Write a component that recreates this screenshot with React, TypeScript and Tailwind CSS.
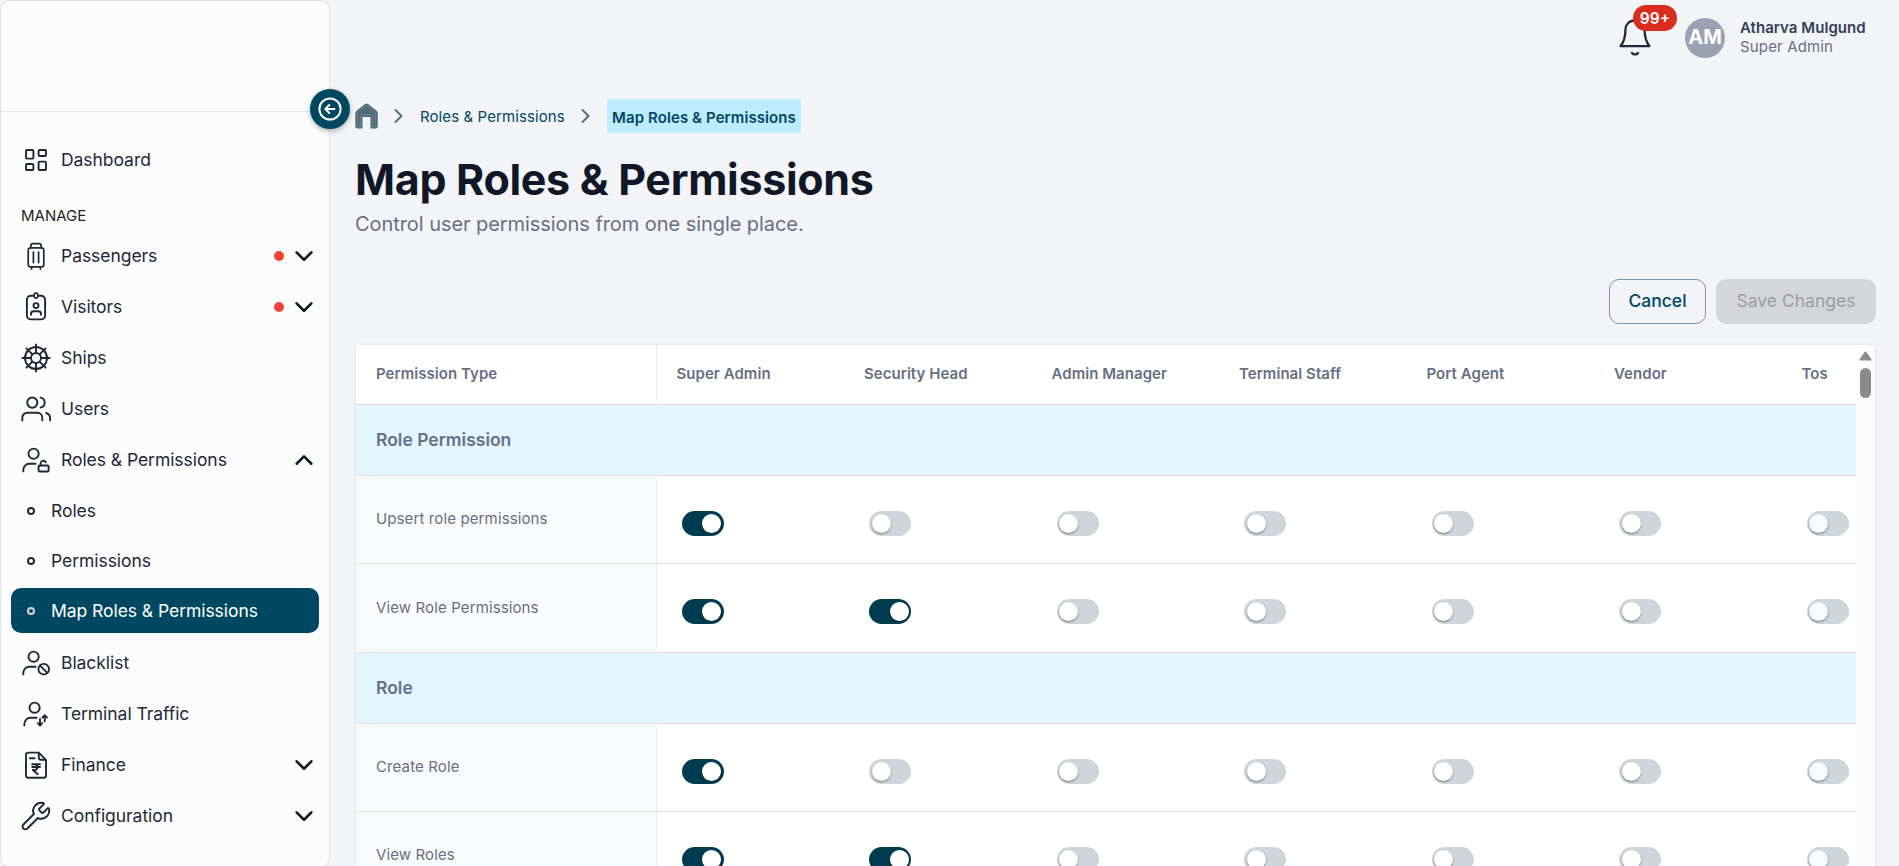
import type { ReactNode } from "react";

const heads = ["Super Admin", "Security Head", "Admin Manager", "Terminal Staff", "Port Agent", "Vendor", "Tos"];

type Row = { label: string; on: number; height: string; section?: boolean };

const rows: Row[] = [
  { label: "Role Permission", on: 0, height: "h-[71px]", section: true },
  { label: "Upsert role permissions", on: 1, height: "h-[88px]" },
  { label: "View Role Permissions", on: 2, height: "h-[89px]" },
  { label: "Role", on: 0, height: "h-[71px]", section: true },
  { label: "Create Role", on: 1, height: "h-[88px]" },
  { label: "View Roles", on: 2, height: "h-[88px]" },
];

function Icon({ children }: { children: ReactNode }) {
  return (
    <svg
      width="30"
      height="30"
      viewBox="0 0 30 30"
      fill="none"
      stroke="#1d2939"
      strokeWidth="1.9"
      strokeLinecap="round"
      strokeLinejoin="round"
      className="shrink-0 overflow-visible"
    >
      {children}
    </svg>
  );
}

const dashboardIcon = (
  <Icon>
    <rect x="5" y="5" width="7.4" height="8.6" rx="1" />
    <rect x="17.6" y="5" width="7.4" height="6" rx="1" />
    <rect x="5" y="19" width="7.4" height="6" rx="1" />
    <rect x="17.6" y="16.6" width="7.4" height="8.4" rx="1" />
  </Icon>
);

const passengersIcon = (
  <Icon>
    <rect x="7.2" y="6.8" width="15.6" height="19" rx="2.4" strokeWidth="1.7" />
    <path d="M9.9 6.6V4.6a2 2 0 0 1 2-2h6.2a2 2 0 0 1 2 2v2M12.4 11v10.6M17.6 11v10.6M10.6 26v2M19.4 26v2" strokeWidth="1.7" />
  </Icon>
);

const visitorsIcon = (
  <Icon>
    <path d="M12.8 3.8h-2.9a4 4 0 0 0-4 4v15.6a4 4 0 0 0 4 4h10.2a4 4 0 0 0 4-4V7.8a4 4 0 0 0-4-4h-2.9" />
    <rect x="13.2" y="1.2" width="3.6" height="5" rx="1.6" strokeWidth="1.7" />
    <circle cx="15" cy="13.6" r="2.5" />
    <path d="M10 22.8v-1a2.6 2.6 0 0 1 2.6-2.6h4.8a2.6 2.6 0 0 1 2.6 2.6v1" />
  </Icon>
);

const shipsIcon = (
  <Icon>
    <circle cx="15" cy="15" r="11" />
    <circle cx="15" cy="15" r="5" />
    <path d="M15 1.4V10M15 20v8.6M1.4 15H10M20 15h8.6M5.4 5.4l6 6M18.6 18.6l6 6M24.6 5.4l-6 6M11.4 18.6l-6 6" />
  </Icon>
);

const usersIcon = (
  <Icon>
    <circle cx="11.3" cy="8.6" r="5.1" />
    <path d="M1.3 26.4v-2.6a5 5 0 0 1 5-5h10a5 5 0 0 1 5 5v2.6M19.6 3.6a5.1 5.1 0 0 1 0 10M25.2 19c2.4.8 3.9 2.6 3.9 5.2v2.2" />
  </Icon>
);

const rolesIcon = (
  <Icon>
    <circle cx="12.6" cy="8.7" r="5.1" />
    <path d="M2.3 26.4v-1.6a6 6 0 0 1 6-6h6.2" />
    <rect x="17.6" y="20.5" width="10" height="6" rx="1" />
    <path d="M19.6 20.3v-1.7a2.8 2.8 0 0 1 5.2-1.4" />
  </Icon>
);

const blacklistIcon = (
  <Icon>
    <circle cx="12.6" cy="8.7" r="5.1" />
    <path d="M2.3 26.4v-1.6a6 6 0 0 1 6-6h6.2" />
    <circle cx="22.7" cy="21.2" r="5.3" />
    <path d="M19 17.6l7.3 7.3" />
  </Icon>
);

const trafficIcon = (
  <Icon>
    <circle cx="13.6" cy="8.7" r="5.1" />
    <path d="M3.4 26.4v-1.6a6 6 0 0 1 6-6h6.2" />
    <path d="M19 20v6.2M16.8 24.2l2.2 2.3 2.2-2.3M23.7 22.6v-6.2M21.4 18.6l2.3-2.4 2.3 2.4" />
  </Icon>
);

const financeIcon = (
  <Icon>
    <path d="M17.8 2.6H7.2a2.2 2.2 0 0 0-2.2 2.2v20.8a2.2 2.2 0 0 0 2.2 2.2h15.6a2.2 2.2 0 0 0 2.2-2.2V9.8zM17.8 2.6v5.2a2 2 0 0 0 2 2H25M8.8 8.3h4.8" />
    <path d="M11.2 14.2h7.8M11.2 17h7.8M12.2 14.2h1.4c3.8 0 3.8 5.8 0 5.8h-1.8l5 4.2" />
  </Icon>
);

const wrenchIcon = (
  <Icon>
    <path
      transform="translate(-1.1 -.9) scale(1.33)"
      strokeWidth="1.45"
      d="M14.7 6.3a1 1 0 0 0 0 1.4l1.6 1.6a1 1 0 0 0 1.4 0l3.106-3.105c.32-.322.863-.22.983.218a6 6 0 0 1-8.259 7.057l-7.91 7.91a1 1 0 0 1-2.999-3l7.91-7.91a6 6 0 0 1 7.057-8.259c.438.12.54.662.219.984z"
    />
  </Icon>
);

function Chevron({ up }: { up?: boolean }) {
  return (
    <svg width="20" height="12" viewBox="0 0 20 12" fill="none" stroke="#101828" strokeWidth="2.6" strokeLinecap="round" strokeLinejoin="round">
      <path d={up ? "M2.6 9.7L10 2.4l7.4 7.3" : "M2.6 2.4L10 9.7l7.4-7.3"} />
    </svg>
  );
}

function NavItem({ icon, label, dot, arrow }: { icon: ReactNode; label: string; dot?: boolean; arrow?: "up" | "down" }) {
  return (
    <a className="flex h-[51px] items-center pl-5 pr-[15px] text-[17.5px] tracking-[-0.05px] text-[#1d2939]">
      {icon}
      <span className="ml-[10px] grow whitespace-nowrap pt-px">{label}</span>
      {dot && <span className="mr-[10px] size-[10px] rounded-full bg-[#f44336]" />}
      {arrow && <Chevron up={arrow === "up"} />}
    </a>
  );
}

function SubItem({ label, active }: { label: string; active?: boolean }) {
  return (
    <a
      className={
        "mx-[10px] flex h-[45px] items-center rounded-[10px] pl-4 text-[17.5px] tracking-[-0.05px] " +
        (active ? "bg-[#004861] text-white" : "text-[#1d2939]")
      }
    >
      <span className={"size-2 rounded-full border-2 " + (active ? "border-[#d5d5cf]" : "border-[#1d2939]")} />
      <span className="ml-4 whitespace-nowrap pt-[2px]">{label}</span>
    </a>
  );
}

function Toggle({ on, last }: { on: boolean; last: boolean }) {
  return (
    <span className={"flex h-[25px] w-[42px] rounded-full px-[2.5px] pt-[2.5px] " + (on ? "justify-end bg-[#003c50]" : "bg-[#d0d5dd]")}>
      <span className={"size-[19px] rounded-full shadow-[0_1px_2px_rgba(16,24,40,0.5)] " + (last ? "bg-[#f9fafb]" : "bg-white")} />
    </span>
  );
}

function Crumb() {
  return (
    <svg width="10" height="16" viewBox="0 0 10 16" fill="none" stroke="#53707c" strokeWidth="2" strokeLinecap="round" strokeLinejoin="round">
      <path d="M1.5 2l6 6-6 6" />
    </svg>
  );
}

export default function App() {
  return (
    <div className="flex h-[866px] w-[1899px] overflow-hidden bg-[#f2f4f8] font-['Inter',sans-serif]">
      <aside className="relative flex h-[868px] w-[330px] shrink-0 flex-col rounded-[10px] border border-[#dfe1e6] bg-[#fcfcfd]">
        <div className="h-[111px] shrink-0 border-b border-[#e4e6ea]" />
        <button className="absolute left-[309px] top-[88px] flex size-10 items-center justify-center rounded-full bg-[#004861] shadow-[0_2px_5px_rgba(0,0,0,0.3)]">
          <svg width="24" height="24" viewBox="0 0 24 24" fill="none" stroke="white" strokeWidth="2" strokeLinecap="round" strokeLinejoin="round">
            <circle cx="12" cy="12" r="10.6" />
            <path d="M16.5 12h-9M11.3 8l-4 4 4 4" />
          </svg>
        </button>
        <nav className="pt-[22px]">
          <NavItem icon={dashboardIcon} label="Dashboard" />
          <h2 className="mt-[20px] h-[25.5px] pl-5 text-[15px] leading-[22px] text-[#1f1f1f]">MANAGE</h2>
          <NavItem icon={passengersIcon} label="Passengers" dot arrow="down" />
          <NavItem icon={visitorsIcon} label="Visitors" dot arrow="down" />
          <NavItem icon={shipsIcon} label="Ships" />
          <NavItem icon={usersIcon} label="Users" />
          <NavItem icon={rolesIcon} label="Roles & Permissions" arrow="up" />
          <div className="mb-1 mt-[2.5px] flex flex-col gap-[5px]">
            <SubItem label="Roles" />
            <SubItem label="Permissions" />
            <SubItem label="Map Roles & Permissions" active />
          </div>
          <NavItem icon={blacklistIcon} label="Blacklist" />
          <NavItem icon={trafficIcon} label="Terminal Traffic" />
          <NavItem icon={financeIcon} label="Finance" arrow="down" />
          <NavItem icon={wrenchIcon} label="Configuration" arrow="down" />
        </nav>
      </aside>

      <main className="flex min-w-0 grow flex-col pl-[25px] pr-[23px]">
        <header className="flex h-[76px] shrink-0 items-center justify-end pr-[10px]">
          <div className="relative mr-[34px] h-[38px] w-8">
            <svg width="32" height="38" viewBox="0 0 32 38" fill="none" stroke="#1d2939" strokeWidth="2.3" strokeLinecap="round" strokeLinejoin="round">
              <path d="M16 1.5c-6 0-9.6 4-9.6 9.5 0 7.5-1.8 12.2-4.8 16.2h28.8c-3-4-4.8-8.7-4.8-16.2C25.6 5.5 22 1.5 16 1.5zM13 34c1.3 1.9 4.7 1.9 6 0" />
            </svg>
            <span className="absolute left-[14px] top-[-14px] flex h-[26px] w-11 items-center justify-center rounded-full bg-[#d92d20] pt-px text-[15.5px] font-semibold text-white">
              99+
            </span>
          </div>
          <span className="flex size-10 items-center justify-center rounded-full bg-[#98a2b3] pb-[2px] text-[20px] font-bold text-white">AM</span>
          <div className="mb-[2px] ml-[15px] w-[126px] whitespace-nowrap text-[15px] leading-[19px]">
            <p className="font-semibold tracking-[0.05px] text-[#344054]">Atharva Mulgund</p>
            <p className="tracking-[0.15px] text-[#667085]">Super Admin</p>
          </div>
        </header>

        <div className="mt-[23px] flex h-[34px] shrink-0 items-center whitespace-nowrap text-[15px] text-[#004861]">
          <svg width="24" height="26" viewBox="0 0 24 26">
            <path d="M11.5 .5c.7 0 1.3.2 1.900.7l8.100 6.600c.9.7 1.300 1.600 1.300 2.700v12.500c0 1.500-1 2.500-2.300 2.500H15.500v-10.500c0-.6-.4-1-1-1h-6c-.6 0-1 .4-1 1v10.500H2.600C1.300 25.500.3 24.500.3 23V10.500c0-1.100.4-2 1.300-2.700l8-6.600c.6-.5 1.200-.7 1.900-.7z" fill="#4f6b77" />
            <path d="M5.300 23.500H3.600c-.8 0-1.200-.4-1.200-1.200V11c0-.8.3-1.300.9-1.800L10.500 3c.7-.5 1.300-.5 2 0l7.300 6.200c.6.5.9 1 .9 1.800v11.300c0 .8-.4 1.200-1.200 1.200h-1.700V13.500c0-1-.6-1.600-1.600-1.600H7c-1 0-1.600.6-1.600 1.600z" fill="none" stroke="#7b909a" strokeWidth=".7" />
          </svg>
          <span className="ml-[15px] mr-4"><Crumb /></span>
          <a className="w-[145px] pt-[3px] tracking-[0.09px]">Roles &amp; Permissions</a>
          <span className="ml-4 mr-4"><Crumb /></span>
          <span className="flex h-[34px] w-[194px] items-center justify-center rounded-[2px] bg-[#bdecff] pt-[5px] font-semibold tracking-[0.09px]">
            Map Roles &amp; Permissions
          </span>
        </div>

        <h1 className="mt-[19px] h-[54px] whitespace-nowrap text-[43px] font-bold leading-[54px] tracking-[-0.32px] text-[#101828]">Map Roles &amp; Permissions</h1>
        <p className="mt-[4px] h-[28px] whitespace-nowrap text-[20px] leading-[28px] tracking-[-0.06px] text-[#667085]">Control user permissions from one single place.</p>

        <div className="mt-[41px] flex h-[45px] shrink-0 justify-end gap-[10px] text-[17.5px]">
          <button className="w-[97px] rounded-[10px] border border-[#6d9bac] font-medium text-[#004861]">Cancel</button>
          <button className="w-40 rounded-[10px] bg-[#d5d6da] text-[#9b9da1]">Save Changes</button>
        </div>

        <div className="ml-[0.5px] mt-[21px] flex h-[540px] w-[1519.5px] shrink-0 bg-white shadow-[0_0_3px_rgba(16,24,40,0.12)]">
          <div className="w-[1500.5px] shrink-0 overflow-hidden">
            <div className="flex h-[60px] w-[1614px] border-b border-[#dcdfe3] text-[15px] font-semibold tracking-[0.05px] text-[#667085]">
              <div className="w-[301px] shrink-0 border-r border-[#eaecf0] pl-[20.5px] leading-[57px]">Permission Type</div>
              {heads.map((h) => (
                <div key={h} className="w-[187.5px] shrink-0 pl-[20px] leading-[57px]">{h}</div>
              ))}
            </div>
            {rows.map((r) =>
              r.section ? (
                <div key={r.label} className={"flex items-center border-b border-[#dcdfe3] bg-[#e1f6fe] pl-[20.5px] pt-px text-[17.5px] font-semibold text-[#667085] " + r.height}>
                  {r.label}
                </div>
              ) : (
                <div key={r.label} className={"flex w-[1614px] border-b border-[#dcdfe3] " + r.height}>
                  <div className="flex w-[301px] shrink-0 items-center border-r border-[#eaecf0] bg-[#f9fafb] pl-[20.5px] text-[15px] tracking-[0.12px] text-[#667085]">
                    {r.label}
                  </div>
                  {heads.map((h, i) => (
                    <div key={h} className="w-[187.5px] shrink-0 pl-[25px] pt-[35px]">
                      <Toggle on={i < r.on} last={i === 6} />
                    </div>
                  ))}
                </div>
              )
            )}
          </div>
          <div className="flex w-[19px] flex-col items-center bg-[#fcfcfc] pt-[6px]">
            <svg width="13" height="10" viewBox="0 0 13 10">
              <path d="M6.5 1.5L11.5 8.5h-10z" fill="#8b8b8b" stroke="#8b8b8b" strokeWidth="2" strokeLinejoin="round" />
            </svg>
            <div className="mt-[7px] h-[30px] w-[11px] rounded-full bg-[#8b8b8b]" />
          </div>
        </div>
      </main>
    </div>
  );
}
